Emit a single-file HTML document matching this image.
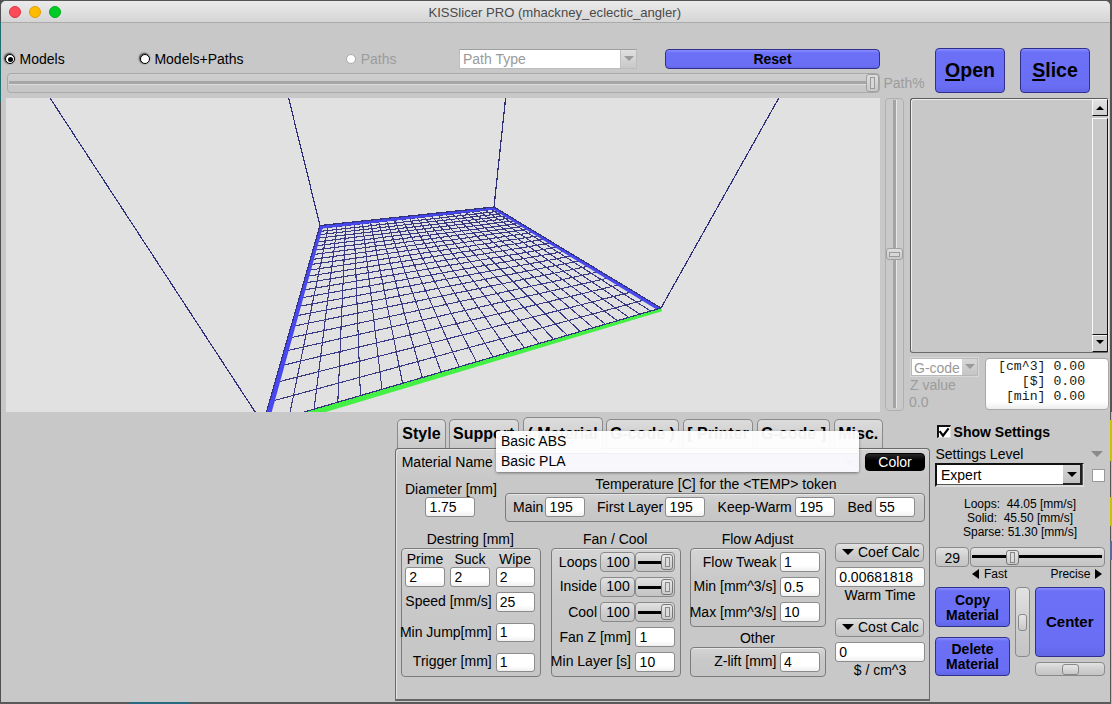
<!DOCTYPE html><html><head><meta charset="utf-8"><title>KISSlicer PRO</title><style>
*{margin:0;padding:0;box-sizing:border-box}
html,body{width:1112px;height:704px;overflow:hidden;background:#555;font-family:"Liberation Sans",sans-serif}
.t{position:absolute;line-height:1;white-space:nowrap}
.win{position:absolute;left:1px;top:1px;width:1109px;height:701px;background:#c8c8c8;border-radius:5px 5px 0 0;overflow:hidden}
.tb{position:absolute;left:0;top:0;width:1109px;height:22px;background:linear-gradient(#ececec,#d6d6d6);border-bottom:1px solid #b0b0b0}
.dot{position:absolute;width:12px;height:12px;border-radius:50%}
.a{position:absolute}
.inp{position:absolute;background:linear-gradient(#fff 70%,#f0f0f0);border:1px solid #8c8c8c;border-radius:3px}
.grp{position:absolute;border:1px solid #7c7c7c;border-radius:4px;background:linear-gradient(#d4d4d4,#c9c9c9 40%,#c6c6c6);box-shadow:inset 0 1px 0 #e6e6e6}
.gbtn{position:absolute;border:1px solid #8a8a8a;border-radius:4px;background:linear-gradient(#e2e2e2,#cfcfcf 50%,#c4c4c4)}
.bbtn{position:absolute;border:1px solid #30308c;border-radius:4px;background:linear-gradient(#8a8eff,#6c70f7 3px,#6a6ef4 85%,#6166e6)}
.tab{position:absolute;border:1px solid #8a8a8a;border-bottom:none;border-radius:5px 5px 0 0;background:linear-gradient(#dcdcdc,#c8c8c8)}
</style></head><body>
<div class="a" style="left:0;top:0;width:1px;height:704px;background:#505050"></div>
<div class="a" style="left:0;top:702px;width:1112px;height:2px;background:#5a5a5a"></div>
<div class="a" style="left:130px;top:702px;width:60px;height:2px;background:#2a6a80"></div>
<div class="a" style="left:0;top:22px;width:1px;height:80px;background:#1c6e70"></div>
<div class="a" style="left:1111px;top:412px;width:1px;height:292px;background:#bebebe"></div>
<div class="a" style="left:1110px;top:420px;width:2px;height:41px;background:#c8c400"></div>
<div class="a" style="left:1110px;top:497px;width:2px;height:29px;background:#c8c400"></div>
<div class="a" style="left:1110px;top:541px;width:2px;height:19px;background:#5a6a9a"></div>
<div class="win">
<div class="a" style="left:-1px;top:-1px;width:1112px;height:704px">
<div class="a" style="left:1px;top:1px;width:1109px;height:22px;background:linear-gradient(#ebebeb,#d5d5d5);border-bottom:1px solid #ababab"></div>
<div class="dot" style="left:9px;top:6px;background:#fc4b58;border:1px solid #e0313e"></div>
<div class="dot" style="left:29px;top:6px;background:#febb00;border:1px solid #e09e00"></div>
<div class="dot" style="left:49px;top:6px;background:#00cc25;border:1px solid #00ad1b"></div>
<div class="t" style="left:428.50px;top:5.91px;font-size:13.1px;font-weight:normal;color:#4a4a4a;">KISSlicer PRO (mhackney_eclectic_angler)</div>
<div class="a" style="left:5px;top:54px;width:10px;height:10px;border-radius:50%;background:#fff;border:1.5px solid #000;box-shadow:-0.7px -0.7px 1.5px 0.5px rgba(0,0,0,0.6);"></div>
<div class="a" style="left:7.5px;top:56.5px;width:5px;height:5px;border-radius:50%;background:#000"></div>
<div class="t" style="left:19.50px;top:51.75px;font-size:14px;font-weight:normal;color:#000;">Models</div>
<div class="a" style="left:140px;top:54px;width:10px;height:10px;border-radius:50%;background:#fff;border:1.5px solid #000;box-shadow:-0.7px -0.7px 1.5px 0.5px rgba(0,0,0,0.6);"></div>
<div class="t" style="left:154.40px;top:51.75px;font-size:14px;font-weight:normal;color:#000;">Models+Paths</div>
<div class="a" style="left:346px;top:54px;width:10px;height:10px;border-radius:50%;background:#fff;border:1.5px solid #a8a8a8;"></div>
<div class="t" style="left:360.70px;top:51.75px;font-size:14px;font-weight:normal;color:#9c9c9c;">Paths</div>
<div class="a" style="left:459px;top:49px;width:178px;height:20px;background:#fff;border:1px solid #bdbdbd;border-top-color:#a0a0a0"></div>
<div class="a" style="left:620px;top:50px;width:16px;height:18px;background:linear-gradient(#e0e0e0,#c8c8c8);border-left:1px solid #c0c0c0"></div>
<div class="a" style="left:623.5px;top:56px;width:0;height:0;border-left:5px solid transparent;border-right:5px solid transparent;border-top:5px solid #9a9a9a"></div>
<div class="t" style="left:463.00px;top:51.75px;font-size:14px;font-weight:normal;color:#9a9a9a;">Path Type</div>
<div class="bbtn" style="left:665.0px;top:49.0px;width:215.0px;height:20.0px;"></div>
<div class="t" style="left:572.50px;top:52.15px;width:400px;text-align:center;font-size:14px;font-weight:bold;color:#000;">Reset</div>
<div class="a" style="left:7px;top:73px;width:873px;height:20px;border:1px solid #a9a9a9;border-radius:4px;background:linear-gradient(#cfcfcf,#c6c6c6)"></div>
<div class="a" style="left:9px;top:80.5px;width:857px;height:3px;background:#a6a6a6"></div>
<div class="a" style="left:9px;top:83.5px;width:857px;height:1px;background:#dcdcdc"></div>
<div class="a" style="left:866px;top:74px;width:13px;height:18px;border:1px solid #a0a0a0;border-radius:3px;background:linear-gradient(#dedede,#c8c8c8)"></div>
<div class="a" style="left:870px;top:77px;width:5px;height:12px;border:1px solid #9a9a9a;background:#d8d8d8"></div>
<div class="t" style="left:883.50px;top:75.85px;font-size:14px;font-weight:normal;color:#9c9c9c;">Path%</div>
<div class="bbtn" style="left:935.0px;top:48.2px;width:70.0px;height:44.5px;border-radius:4px"></div>
<div class="t" style="left:770.00px;top:60.99px;width:400px;text-align:center;font-size:19.5px;font-weight:bold;color:#000;"><u style="text-decoration-thickness:2px;text-underline-offset:2px">O</u>pen</div>
<div class="bbtn" style="left:1020.0px;top:48.2px;width:70.0px;height:44.5px;border-radius:4px"></div>
<div class="t" style="left:855.00px;top:60.99px;width:400px;text-align:center;font-size:19.5px;font-weight:bold;color:#000;"><u style="text-decoration-thickness:2px;text-underline-offset:2px">S</u>lice</div>
<svg class="a" style="left:6px;top:98px" width="874" height="314" viewBox="6 98 874 314" shape-rendering="crispEdges"><rect x="6" y="98" width="874" height="314" fill="#e1e1e1"/><path d="M320.0 225.5L263.0 424.0M320.0 225.5L494.0 207.0M328.7 224.6L289.2 416.4M319.2 228.4L497.3 209.0M337.3 223.7L314.1 409.1M318.3 231.6L500.7 211.1M345.7 222.8L337.8 402.2M317.3 234.9L504.4 213.3M354.0 221.9L360.4 395.6M316.3 238.4L508.1 215.6M362.2 221.0L382.0 389.3M315.2 242.1L512.1 218.0M370.2 220.2L402.6 383.3M314.1 246.1L516.3 220.5M378.0 219.3L422.3 377.6M312.9 250.3L520.7 223.2M385.8 218.5L441.1 372.1M311.6 254.8L525.4 226.0M393.4 217.7L459.2 366.8M310.2 259.7L530.3 228.9M400.9 216.9L476.5 361.8M308.7 264.9L535.5 232.1M408.2 216.1L493.1 356.9M307.1 270.5L541.0 235.4M415.5 215.4L509.1 352.3M305.3 276.6L546.8 238.9M422.6 214.6L524.5 347.8M303.4 283.2L553.0 242.7M429.6 213.8L539.2 343.5M301.4 290.4L559.6 246.7M436.5 213.1L553.5 339.3M299.1 298.2L566.7 251.0M443.3 212.4L567.2 335.4M296.7 306.8L574.3 255.5M450.0 211.7L580.4 331.5M293.9 316.3L582.4 260.4M456.5 211.0L593.1 327.8M290.9 326.7L591.1 265.7M463.0 210.3L605.4 324.2M287.6 338.4L600.4 271.4M469.4 209.6L617.3 320.7M283.8 351.4L610.6 277.5M475.7 208.9L628.8 317.4M279.6 366.1L621.6 284.2M481.9 208.3L639.9 314.2M274.8 382.8L633.6 291.4M488.0 207.6L650.6 311.0M269.3 401.9L646.7 299.3M494.0 207.0L661.0 308.0M263.0 424.0L661.0 308.0" stroke="#3a3a84" stroke-width="1.1" fill="none"/><path d="M50.0 98.0L263.0 424.0M288.6 98.0L320.0 225.5M505.6 98.0L494.0 207.0M778.8 98.0L661.0 308.0" stroke="#30307a" stroke-width="1.2" fill="none"/><path d="M320.00 225.50 L494.00 207.00 L494.27 209.59 L320.34 228.68ZM494.00 207.00 L661.00 308.00 L659.14 311.08 L492.65 209.22ZM263.00 424.00 L320.00 225.50 L323.08 226.38 L268.00 425.44Z" fill="#4848f0" shape-rendering="auto"/><path d="M661.00 308.00 L263.00 424.00 L264.82 430.24 L661.98 311.36Z" fill="#44f044" shape-rendering="auto"/><path d="M320.0 225.5L494.0 207.0M494.0 207.0L661.0 308.0M661.0 308.0L263.0 424.0M263.0 424.0L320.0 225.5" stroke="#34347e" stroke-width="1.2" fill="none"/></svg>
<div class="a" style="left:885px;top:97.5px;width:19px;height:313px;border:1px solid #b0b0b0;border-radius:4px;background:#c9c9c9"></div>
<div class="a" style="left:892.5px;top:100px;width:4.5px;height:308px;background:#a4a4a4;border-right:1px solid #e6e6e6"></div>
<div class="a" style="left:886px;top:248px;width:17px;height:12px;border:1px solid #a0a0a0;border-radius:3px;background:linear-gradient(#dedede,#c8c8c8)"></div>
<div class="a" style="left:889px;top:252px;width:11px;height:5px;border:1px solid #9a9a9a;background:#d8d8d8"></div>
<div class="a" style="left:910px;top:98px;width:199px;height:255px;border:1px solid #5a5a5a;border-right-color:#e8e8e8;border-bottom-color:#6a6a6a;border-radius:3px;background:#c8c8c8;box-shadow:inset 1px 1px 0 #eeeeee"></div>
<div class="a" style="left:1092px;top:99px;width:16px;height:16.8px;background:linear-gradient(#e2e2e2,#cfcfcf);border-left:1px solid #fafafa;border-top:1px solid #f4f4f4;border-right:1px solid #111;border-bottom:1.5px solid #111"></div>
<div class="a" style="left:1096px;top:105.5px;width:0;height:0;border-left:4px solid transparent;border-right:4px solid transparent;border-bottom:4.5px solid #000"></div>
<div class="a" style="left:1092px;top:117.5px;width:16px;height:216px;background:#c8c8c8;border-left:1.5px solid #fafafa;border-top:1px solid #fafafa;border-right:1px solid #111"></div>
<div class="a" style="left:1092px;top:333.5px;width:16px;height:18px;background:#cdcdcd;border-left:1px solid #fafafa;border-top:1.5px solid #111;border-right:1px solid #111;border-bottom:1px solid #111;box-shadow:inset 0 1px 0 #f4f4f4"></div>
<div class="a" style="left:1096px;top:340.3px;width:0;height:0;border-left:4px solid transparent;border-right:4px solid transparent;border-top:4.5px solid #000"></div>
<div class="a" style="left:911px;top:358px;width:67px;height:18px;background:#fff;border:1px solid #b8b8b8;box-shadow:0 0 0 1px #d8d8d8"></div>
<div class="a" style="left:962px;top:359px;width:15px;height:16px;background:linear-gradient(#d8d8d8,#c4c4c4)"></div>
<div class="a" style="left:964.5px;top:364px;width:0;height:0;border-left:5px solid transparent;border-right:5px solid transparent;border-top:5px solid #9a9a9a"></div>
<div class="t" style="left:914.00px;top:360.65px;font-size:14px;font-weight:normal;color:#9a9a9a;">G-code</div>
<div class="t" style="left:910.00px;top:377.75px;font-size:14px;font-weight:normal;color:#9c9c9c;">Z value</div>
<div class="t" style="left:909.00px;top:395.15px;font-size:14px;font-weight:normal;color:#9c9c9c;">0.0</div>
<div class="a" style="left:985px;top:358px;width:124px;height:52px;background:linear-gradient(#fff 85%,#ececec);border:1px solid #a8a8a8;border-radius:4px"></div>
<div class="t" style="left:998.00px;top:359.73px;font-size:13.2px;font-weight:normal;color:#1a1a1a;font-family:'Liberation Mono', monospace">[cm^3]&nbsp;0.00</div>
<div class="t" style="left:998.00px;top:374.83px;font-size:13.2px;font-weight:normal;color:#1a1a1a;font-family:'Liberation Mono', monospace">&nbsp;&nbsp;&nbsp;[$]&nbsp;0.00</div>
<div class="t" style="left:998.00px;top:389.63px;font-size:13.2px;font-weight:normal;color:#1a1a1a;font-family:'Liberation Mono', monospace">&nbsp;[min]&nbsp;0.00</div>
<div class="tab" style="left:397.3px;top:419.4px;width:48.3px;height:29.6px;"></div>
<div class="t" style="left:221.45px;top:426.46px;width:400px;text-align:center;font-size:16px;font-weight:bold;color:#000;">Style</div>
<div class="tab" style="left:448.5px;top:419.4px;width:70.5px;height:29.6px;"></div>
<div class="t" style="left:283.75px;top:426.46px;width:400px;text-align:center;font-size:16px;font-weight:bold;color:#000;">Support</div>
<div class="tab" style="left:522.5px;top:417.4px;width:80.0px;height:31.6px;"></div>
<div class="t" style="left:362.50px;top:426.46px;width:400px;text-align:center;font-size:16px;font-weight:bold;color:#000;">( Material</div>
<div class="tab" style="left:605.8px;top:419.4px;width:73.2px;height:29.6px;"></div>
<div class="t" style="left:442.40px;top:426.46px;width:400px;text-align:center;font-size:16px;font-weight:bold;color:#000;">G-code )</div>
<div class="tab" style="left:682.5px;top:419.4px;width:70.9px;height:29.6px;"></div>
<div class="t" style="left:517.95px;top:426.46px;width:400px;text-align:center;font-size:16px;font-weight:bold;color:#000;">[ Printer</div>
<div class="tab" style="left:756.7px;top:419.4px;width:73.7px;height:29.6px;"></div>
<div class="t" style="left:593.55px;top:426.46px;width:400px;text-align:center;font-size:16px;font-weight:bold;color:#000;">G-code ]</div>
<div class="tab" style="left:833.8px;top:419.4px;width:49.0px;height:29.6px;"></div>
<div class="t" style="left:658.30px;top:426.46px;width:400px;text-align:center;font-size:16px;font-weight:bold;color:#000;">Misc.</div>
<div class="a" style="left:395px;top:447.8px;width:535px;height:253.2px;border:1px solid #6a6a6a;border-bottom:2px solid #666;border-radius:4px 4px 0 0;background:linear-gradient(#d2d2d2,#c8c8c8 12%);box-shadow:inset 1px 1px 0 #e4e4e4"></div>
<div class="a" style="left:523.5px;top:447px;width:78px;height:3px;background:#d2d2d2"></div>
<div class="t" style="left:401.70px;top:454.85px;font-size:14px;font-weight:normal;color:#000;">Material Name</div>
<div class="a" style="left:497px;top:453px;width:361px;height:19px;background:#fff;border:1px solid #aaa"></div>
<div class="a" style="left:844px;top:460px;width:0;height:0;border-left:5px solid transparent;border-right:5px solid transparent;border-top:5px solid #777"></div>
<div class="a" style="left:865.3px;top:452.7px;width:59.5px;height:18.5px;background:linear-gradient(#2a2a2a,#000 40%);border:1px solid #000;border-radius:4px"></div>
<div class="t" style="left:695.00px;top:455.15px;width:400px;text-align:center;font-size:14px;font-weight:normal;color:#fff;">Color</div>
<div class="a" style="left:496px;top:430.5px;width:363px;height:41.5px;background:rgba(255,255,255,0.95);border-radius:2px;box-shadow:0 1px 3px rgba(0,0,0,0.45)"></div>
<div class="a" style="left:496px;top:453.5px;width:363px;height:18.5px;background:rgba(240,240,250,0.5)"></div>
<div class="a" style="left:496px;top:453px;width:363px;height:1px;background:rgba(0,0,0,0.04)"></div>
<div class="t" style="left:501.00px;top:433.65px;font-size:14px;font-weight:normal;color:#000;">Basic ABS</div>
<div class="t" style="left:501.00px;top:453.85px;font-size:14px;font-weight:normal;color:#000;">Basic PLA</div>
<div class="t" style="left:405.00px;top:481.75px;font-size:14px;font-weight:normal;color:#000;">Diameter [mm]</div>
<div class="inp" style="left:425.2px;top:497.3px;width:49.7px;height:19.3px;"></div>
<div class="t" style="left:429.40px;top:500.00px;font-size:14px;font-weight:normal;color:#000;">1.75</div>
<div class="t" style="left:595.30px;top:477.05px;font-size:14px;font-weight:normal;color:#000;">Temperature [C] for the &lt;TEMP&gt; token</div>
<div class="grp" style="left:505.3px;top:492.5px;width:420.1px;height:29.6px;"></div>
<div class="t" style="left:513.00px;top:499.65px;font-size:14px;font-weight:normal;color:#000;">Main</div>
<div class="inp" style="left:545.2px;top:497.1px;width:39.4px;height:19.5px;"></div>
<div class="t" style="left:549.40px;top:499.90px;font-size:14px;font-weight:normal;color:#000;">195</div>
<div class="t" style="left:597.00px;top:499.65px;font-size:14px;font-weight:normal;color:#000;">First Layer</div>
<div class="inp" style="left:665.2px;top:497.1px;width:39.4px;height:19.5px;"></div>
<div class="t" style="left:669.40px;top:499.90px;font-size:14px;font-weight:normal;color:#000;">195</div>
<div class="t" style="left:717.60px;top:499.65px;font-size:14px;font-weight:normal;color:#000;">Keep-Warm</div>
<div class="inp" style="left:795.4px;top:497.1px;width:39.6px;height:19.5px;"></div>
<div class="t" style="left:799.60px;top:499.90px;font-size:14px;font-weight:normal;color:#000;">195</div>
<div class="t" style="left:847.40px;top:499.65px;font-size:14px;font-weight:normal;color:#000;">Bed</div>
<div class="inp" style="left:875.0px;top:497.1px;width:40.1px;height:19.5px;"></div>
<div class="t" style="left:879.20px;top:499.90px;font-size:14px;font-weight:normal;color:#000;">55</div>
<div class="t" style="left:270.30px;top:532.15px;width:400px;text-align:center;font-size:14px;font-weight:normal;color:#000;">Destring [mm]</div>
<div class="grp" style="left:400.6px;top:548.0px;width:140.1px;height:129.2px;"></div>
<div class="t" style="left:225.00px;top:551.85px;width:400px;text-align:center;font-size:14px;font-weight:normal;color:#000;">Prime</div>
<div class="t" style="left:270.00px;top:551.85px;width:400px;text-align:center;font-size:14px;font-weight:normal;color:#000;">Suck</div>
<div class="t" style="left:315.00px;top:551.85px;width:400px;text-align:center;font-size:14px;font-weight:normal;color:#000;">Wipe</div>
<div class="inp" style="left:405.0px;top:567.3px;width:40.2px;height:19.3px;"></div>
<div class="t" style="left:409.20px;top:570.00px;font-size:14px;font-weight:normal;color:#000;">2</div>
<div class="inp" style="left:450.3px;top:567.3px;width:39.9px;height:19.3px;"></div>
<div class="t" style="left:454.50px;top:570.00px;font-size:14px;font-weight:normal;color:#000;">2</div>
<div class="inp" style="left:495.6px;top:567.3px;width:39.4px;height:19.3px;"></div>
<div class="t" style="left:499.80px;top:570.00px;font-size:14px;font-weight:normal;color:#000;">2</div>
<div class="t" style="left:91.70px;top:594.15px;width:400px;text-align:right;font-size:14px;font-weight:normal;color:#000;">Speed [mm/s]</div>
<div class="inp" style="left:495.6px;top:592.0px;width:39.4px;height:19.6px;"></div>
<div class="t" style="left:499.80px;top:594.85px;font-size:14px;font-weight:normal;color:#000;">25</div>
<div class="t" style="left:91.70px;top:624.55px;width:400px;text-align:right;font-size:14px;font-weight:normal;color:#000;">Min Jump[mm]</div>
<div class="inp" style="left:495.6px;top:622.6px;width:39.4px;height:19.3px;"></div>
<div class="t" style="left:499.80px;top:625.30px;font-size:14px;font-weight:normal;color:#000;">1</div>
<div class="t" style="left:91.70px;top:654.35px;width:400px;text-align:right;font-size:14px;font-weight:normal;color:#000;">Trigger [mm]</div>
<div class="inp" style="left:495.6px;top:652.6px;width:39.4px;height:19.3px;"></div>
<div class="t" style="left:499.80px;top:655.30px;font-size:14px;font-weight:normal;color:#000;">1</div>
<div class="t" style="left:415.20px;top:531.85px;width:400px;text-align:center;font-size:14px;font-weight:normal;color:#000;">Fan / Cool</div>
<div class="grp" style="left:550.5px;top:547.7px;width:130.2px;height:129.3px;"></div>
<div class="t" style="left:197.00px;top:554.85px;width:400px;text-align:right;font-size:14px;font-weight:normal;color:#000;">Loops</div>
<div class="gbtn" style="left:600.3px;top:552.2px;width:34.3px;height:19.8px;"></div>
<div class="t" style="left:418.00px;top:554.85px;width:400px;text-align:center;font-size:14px;font-weight:normal;color:#000;">100</div>
<div class="gbtn" style="left:635.4px;top:552.2px;width:39.6px;height:19.8px;"></div>
<div class="a" style="left:638px;top:560.7px;width:24px;height:3px;background:#000"></div>
<div class="a" style="left:660.7px;top:554.2px;width:12.5px;height:15.5px;border:1px solid #777;border-radius:3px;background:linear-gradient(#e8e8e8,#cacaca)"></div>
<div class="a" style="left:664.5px;top:556.7px;width:5px;height:10.5px;border:1px solid #888;background:#dcdcdc"></div>
<div class="t" style="left:197.00px;top:579.45px;width:400px;text-align:right;font-size:14px;font-weight:normal;color:#000;">Inside</div>
<div class="gbtn" style="left:600.3px;top:577.2px;width:34.3px;height:19.8px;"></div>
<div class="t" style="left:418.00px;top:579.45px;width:400px;text-align:center;font-size:14px;font-weight:normal;color:#000;">100</div>
<div class="gbtn" style="left:635.4px;top:577.2px;width:39.6px;height:19.8px;"></div>
<div class="a" style="left:638px;top:585.7px;width:24px;height:3px;background:#000"></div>
<div class="a" style="left:660.7px;top:579.2px;width:12.5px;height:15.5px;border:1px solid #777;border-radius:3px;background:linear-gradient(#e8e8e8,#cacaca)"></div>
<div class="a" style="left:664.5px;top:581.7px;width:5px;height:10.5px;border:1px solid #888;background:#dcdcdc"></div>
<div class="t" style="left:197.00px;top:604.55px;width:400px;text-align:right;font-size:14px;font-weight:normal;color:#000;">Cool</div>
<div class="gbtn" style="left:600.3px;top:602.3px;width:34.3px;height:19.8px;"></div>
<div class="t" style="left:418.00px;top:604.55px;width:400px;text-align:center;font-size:14px;font-weight:normal;color:#000;">100</div>
<div class="gbtn" style="left:635.4px;top:602.3px;width:39.6px;height:19.8px;"></div>
<div class="a" style="left:638px;top:610.8px;width:24px;height:3px;background:#000"></div>
<div class="a" style="left:660.7px;top:604.3px;width:12.5px;height:15.5px;border:1px solid #777;border-radius:3px;background:linear-gradient(#e8e8e8,#cacaca)"></div>
<div class="a" style="left:664.5px;top:606.8px;width:5px;height:10.5px;border:1px solid #888;background:#dcdcdc"></div>
<div class="t" style="left:231.00px;top:629.65px;width:400px;text-align:right;font-size:14px;font-weight:normal;color:#000;">Fan Z [mm]</div>
<div class="inp" style="left:635.4px;top:627.2px;width:39.5px;height:19.8px;"></div>
<div class="t" style="left:639.60px;top:630.15px;font-size:14px;font-weight:normal;color:#000;">1</div>
<div class="t" style="left:231.00px;top:654.45px;width:400px;text-align:right;font-size:14px;font-weight:normal;color:#000;">Min Layer [s]</div>
<div class="inp" style="left:635.4px;top:652.3px;width:39.5px;height:19.3px;"></div>
<div class="t" style="left:639.60px;top:655.00px;font-size:14px;font-weight:normal;color:#000;">10</div>
<div class="t" style="left:557.50px;top:531.85px;width:400px;text-align:center;font-size:14px;font-weight:normal;color:#000;">Flow Adjust</div>
<div class="grp" style="left:690.2px;top:547.7px;width:135.4px;height:79.3px;"></div>
<div class="t" style="left:376.40px;top:554.85px;width:400px;text-align:right;font-size:14px;font-weight:normal;color:#000;">Flow Tweak</div>
<div class="inp" style="left:779.8px;top:552.3px;width:40.1px;height:19.5px;"></div>
<div class="t" style="left:784.00px;top:555.10px;font-size:14px;font-weight:normal;color:#000;">1</div>
<div class="t" style="left:376.40px;top:579.45px;width:400px;text-align:right;font-size:14px;font-weight:normal;color:#000;">Min [mm^3/s]</div>
<div class="inp" style="left:779.8px;top:577.3px;width:40.1px;height:19.3px;"></div>
<div class="t" style="left:784.00px;top:580.00px;font-size:14px;font-weight:normal;color:#000;">0.5</div>
<div class="t" style="left:376.40px;top:604.55px;width:400px;text-align:right;font-size:14px;font-weight:normal;color:#000;">Max [mm^3/s]</div>
<div class="inp" style="left:779.8px;top:602.4px;width:40.1px;height:19.2px;"></div>
<div class="t" style="left:784.00px;top:605.05px;font-size:14px;font-weight:normal;color:#000;">10</div>
<div class="t" style="left:557.50px;top:631.45px;width:400px;text-align:center;font-size:14px;font-weight:normal;color:#000;">Other</div>
<div class="grp" style="left:690.2px;top:647.3px;width:135.4px;height:29.7px;"></div>
<div class="t" style="left:376.40px;top:654.45px;width:400px;text-align:right;font-size:14px;font-weight:normal;color:#000;">Z-lift [mm]</div>
<div class="inp" style="left:779.8px;top:652.3px;width:40.1px;height:19.3px;"></div>
<div class="t" style="left:784.00px;top:655.00px;font-size:14px;font-weight:normal;color:#000;">4</div>
<div class="gbtn" style="left:835.2px;top:542.5px;width:89.3px;height:19.0px;"></div>
<div class="a" style="left:842px;top:549.0px;width:0;height:0;border-left:6px solid transparent;border-right:6px solid transparent;border-top:6.5px solid #000"></div>
<div class="t" style="left:858.00px;top:544.95px;font-size:14px;font-weight:normal;color:#000;">Coef Calc</div>
<div class="inp" style="left:835.0px;top:567.1px;width:90.1px;height:20.0px;"></div>
<div class="t" style="left:839.20px;top:570.15px;font-size:14px;font-weight:normal;color:#000;">0.00681818</div>
<div class="t" style="left:680.00px;top:588.45px;width:400px;text-align:center;font-size:14px;font-weight:normal;color:#000;">Warm Time</div>
<div class="gbtn" style="left:835.2px;top:617.5px;width:89.3px;height:19.0px;"></div>
<div class="a" style="left:842px;top:624.0px;width:0;height:0;border-left:6px solid transparent;border-right:6px solid transparent;border-top:6.5px solid #000"></div>
<div class="t" style="left:858.00px;top:619.95px;font-size:14px;font-weight:normal;color:#000;">Cost Calc</div>
<div class="inp" style="left:835.0px;top:642.1px;width:90.1px;height:20.0px;"></div>
<div class="t" style="left:839.20px;top:645.15px;font-size:14px;font-weight:normal;color:#000;">0</div>
<div class="t" style="left:680.00px;top:663.45px;width:400px;text-align:center;font-size:14px;font-weight:normal;color:#000;">$ / cm^3</div>
<div class="a" style="left:937px;top:425.3px;width:13.5px;height:13px;background:#fff;border:1px solid #ddd;border-top:2px solid #111;border-left:2px solid #111"></div>
<svg class="a" style="left:937px;top:425px" width="14" height="14"><path d="M2.6 6.2 L6 10.6 L11.6 3.4" stroke="#000" stroke-width="2.2" fill="none"/></svg>
<div class="t" style="left:953.60px;top:425.05px;font-size:14px;font-weight:bold;color:#000;">Show Settings</div>
<div class="t" style="left:935.40px;top:446.65px;font-size:14px;font-weight:normal;color:#000;">Settings Level</div>
<div class="a" style="left:1091px;top:451px;width:0;height:0;border-left:6.5px solid transparent;border-right:6.5px solid transparent;border-top:6.5px solid #8a8a8a"></div>
<div class="a" style="left:935.4px;top:462.8px;width:148.3px;height:24px;background:#fff;border:2px solid #111;border-right-color:#ddd;border-bottom-color:#ddd;box-shadow:inset 0 0 0 0 #000"></div>
<div class="a" style="left:937.4px;top:464.8px;width:146px;height:20px;border-right:1px solid #555;border-bottom:1px solid #555"></div>
<div class="a" style="left:1063px;top:464.8px;width:19px;height:20px;background:linear-gradient(#d6d6d6,#c0c0c0);border-right:2px solid #222;border-bottom:2px solid #222"></div>
<div class="a" style="left:1067px;top:472px;width:0;height:0;border-left:5.5px solid transparent;border-right:5.5px solid transparent;border-top:5.5px solid #000"></div>
<div class="t" style="left:941.00px;top:468.45px;font-size:14px;font-weight:normal;color:#000;">Expert</div>
<div class="a" style="left:1092px;top:468.5px;width:13px;height:13px;background:#fff;border:1px solid #999"></div>
<div class="t" style="left:820.00px;top:498.14px;width:400px;text-align:center;font-size:12px;font-weight:normal;color:#000;">Loops:&nbsp;&nbsp;44.05 [mm/s]</div>
<div class="t" style="left:820.00px;top:511.84px;width:400px;text-align:center;font-size:12px;font-weight:normal;color:#000;">Solid:&nbsp;&nbsp;45.50 [mm/s]</div>
<div class="t" style="left:820.00px;top:526.24px;width:400px;text-align:center;font-size:12px;font-weight:normal;color:#000;">Sparse: 51.30 [mm/s]</div>
<div class="gbtn" style="left:934.8px;top:547.3px;width:34.7px;height:19.5px;"></div>
<div class="t" style="left:752.20px;top:550.65px;width:400px;text-align:center;font-size:14px;font-weight:normal;color:#000;">29</div>
<div class="gbtn" style="left:970.3px;top:547.3px;width:134.5px;height:19.5px;"></div>
<div class="a" style="left:972px;top:555.2px;width:130px;height:3px;background:#000"></div>
<div class="a" style="left:1005.8px;top:549.5px;width:13.2px;height:15.5px;border:1px solid #777;border-radius:3px;background:linear-gradient(#e8e8e8,#cacaca)"></div>
<div class="a" style="left:1009.8px;top:552px;width:5px;height:10.5px;border:1px solid #888;background:#dcdcdc"></div>
<div class="a" style="left:972px;top:568.5px;width:0;height:0;border-top:5.5px solid transparent;border-bottom:5.5px solid transparent;border-right:7px solid #000"></div>
<div class="t" style="left:984.00px;top:567.84px;font-size:12px;font-weight:normal;color:#000;">Fast</div>
<div class="t" style="left:690.40px;top:567.84px;width:400px;text-align:right;font-size:12px;font-weight:normal;color:#000;">Precise</div>
<div class="a" style="left:1095px;top:568.5px;width:0;height:0;border-top:5.5px solid transparent;border-bottom:5.5px solid transparent;border-left:7px solid #000"></div>
<div class="bbtn" style="left:935.2px;top:587.4px;width:74.7px;height:39.3px;"></div>
<div class="t" style="left:772.50px;top:592.65px;width:400px;text-align:center;font-size:14px;font-weight:bold;color:#000;">Copy</div>
<div class="t" style="left:772.50px;top:607.65px;width:400px;text-align:center;font-size:14px;font-weight:bold;color:#000;">Material</div>
<div class="bbtn" style="left:935.2px;top:637.2px;width:74.7px;height:39.3px;"></div>
<div class="t" style="left:772.50px;top:642.45px;width:400px;text-align:center;font-size:14px;font-weight:bold;color:#000;">Delete</div>
<div class="t" style="left:772.50px;top:657.45px;width:400px;text-align:center;font-size:14px;font-weight:bold;color:#000;">Material</div>
<div class="gbtn" style="left:1015.1px;top:587.4px;width:14.7px;height:69.2px;border-radius:4px"></div>
<div class="a" style="left:1018px;top:614.3px;width:9px;height:16.4px;border:1px solid #888;border-radius:3px;background:linear-gradient(#e6e6e6,#c8c8c8)"></div>
<div class="bbtn" style="left:1035.0px;top:587.4px;width:69.6px;height:69.2px;"></div>
<div class="t" style="left:869.80px;top:613.80px;width:400px;text-align:center;font-size:15px;font-weight:bold;color:#000;">Center</div>
<div class="gbtn" style="left:1035.0px;top:661.9px;width:69.6px;height:14.6px;"></div>
<div class="a" style="left:1062px;top:664px;width:16.5px;height:11px;border:1px solid #888;border-radius:3px;background:linear-gradient(#e6e6e6,#c8c8c8)"></div>
</div></div>
</body></html>
